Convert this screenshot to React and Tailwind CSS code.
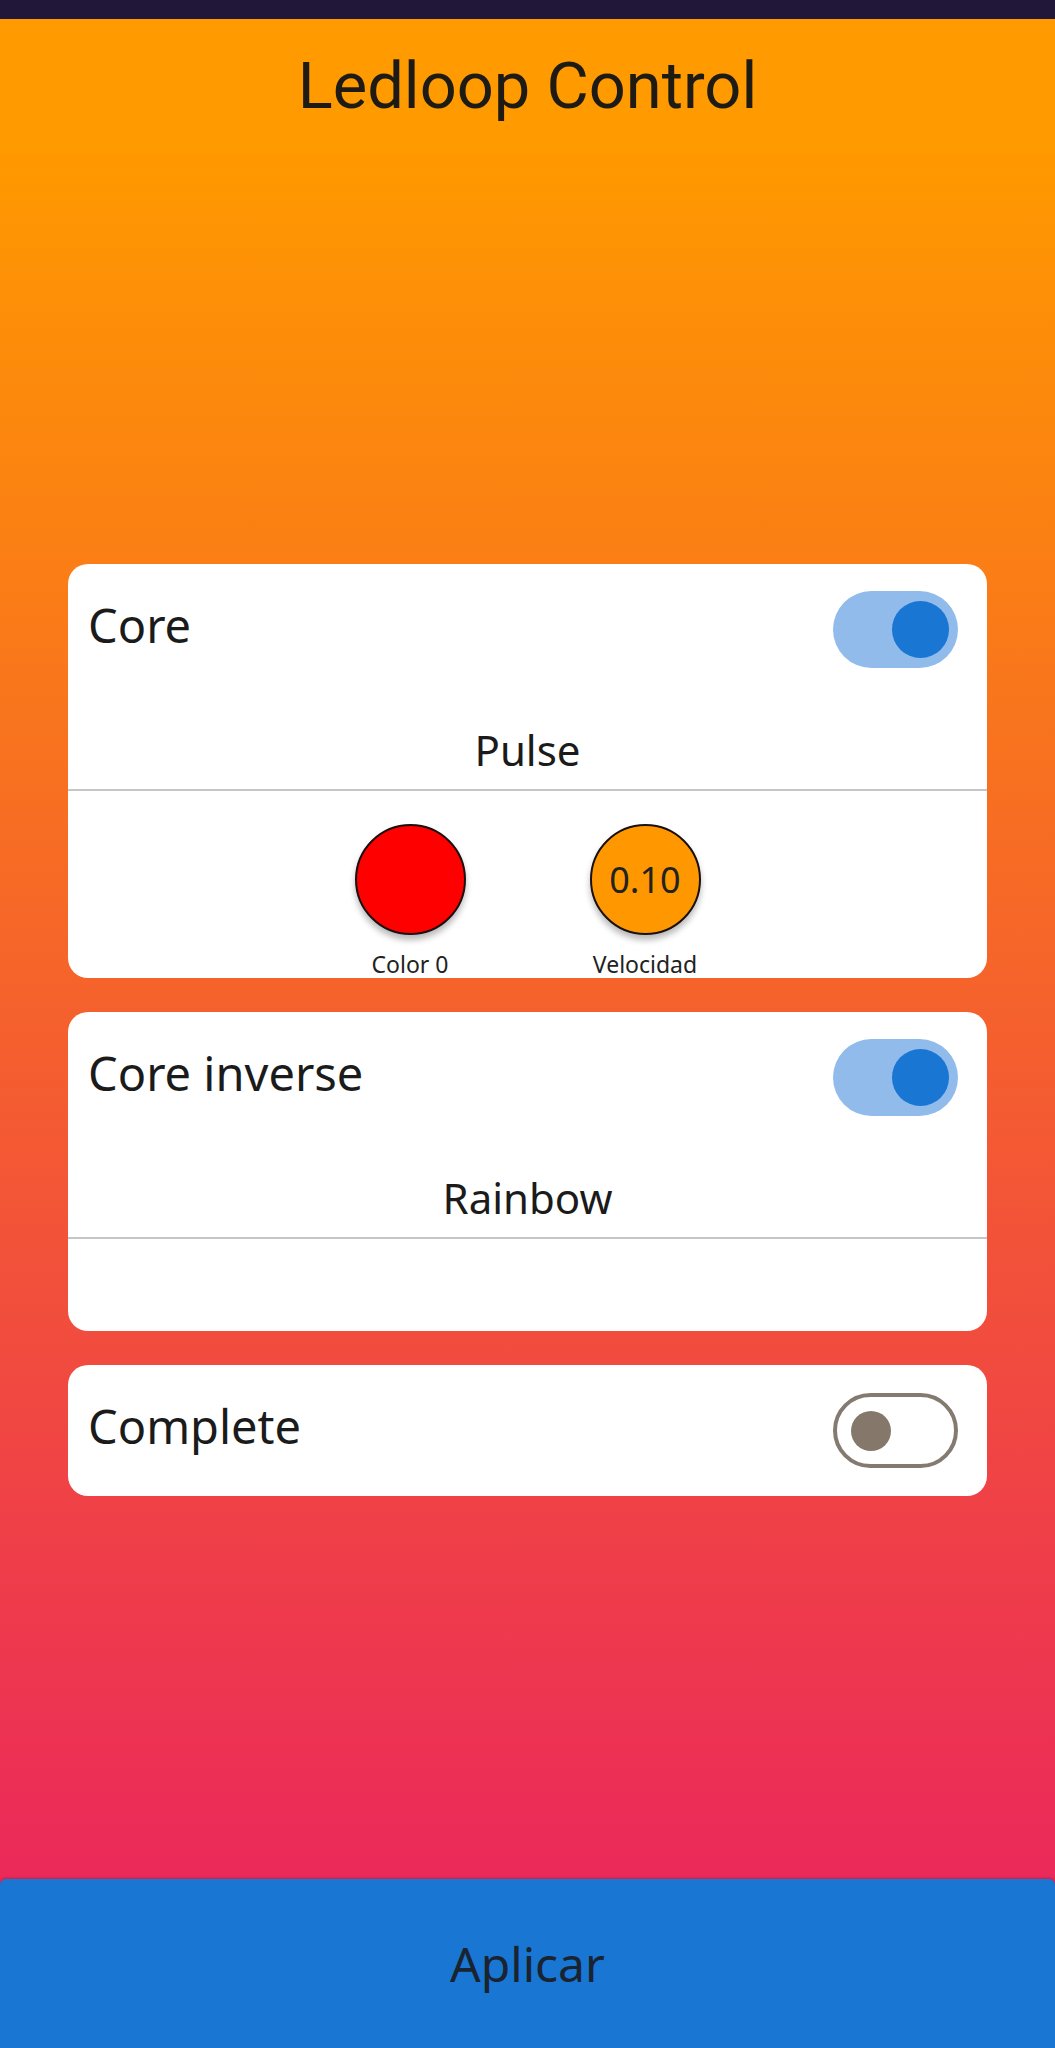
const effects = [
  {
    name: 'Core',
    on: true,
    mode: 'Pulse',
    params: [
      { kind: 'color', value: '#ff0000', label: 'Color 0' },
      { kind: 'number', value: '0.10', label: 'Velocidad' },
    ],
  },
  { name: 'Core inverse', on: true, mode: 'Rainbow', params: [] },
  { name: 'Complete', on: false },
];

const body = { fontFamily: '"Noto Sans", "Open Sans", sans-serif' };

function Toggle({ on }) {
  if (on) {
    return (
      <div className="flex h-[77px] w-[125px] items-center justify-end rounded-full bg-[#90bbea] pr-[9px]">
        <div className="h-[57px] w-[57px] rounded-full bg-[#1976d2]" />
      </div>
    );
  }
  return (
    <div className="flex h-[75px] w-[125px] items-center rounded-full border-4 border-[#857a6f] bg-white pl-[14px]">
      <div className="h-[40px] w-[40px] rounded-full bg-[#85786b]" />
    </div>
  );
}

function Param({ p }) {
  return (
    <div className="flex w-[111px] flex-col items-center">
      <div
        className="flex h-[111px] w-[111px] items-center justify-center rounded-full border-2 border-[#1a1010] shadow-[0_5px_6px_rgba(0,0,0,0.28)]"
        style={{ backgroundColor: p.kind === 'color' ? p.value : '#ff9800' }}
      >
        {p.kind === 'number' && <span className="text-[36px] leading-none text-[#222]">{p.value}</span>}
      </div>
      <span className="mt-[15px] whitespace-nowrap text-[23px] leading-[28px] text-[#222]">{p.label}</span>
    </div>
  );
}

function EffectCard({ effect }) {
  return (
    <div className="mx-auto w-[919px] overflow-hidden rounded-[20px] bg-white">
      <div className="flex h-[131px] items-center justify-between pl-[20px] pr-[29px]">
        <span className="mb-[8px] text-[47px] leading-none text-[#1b1b1b]">{effect.name}</span>
        <Toggle on={effect.on} />
      </div>
      {effect.mode && (
        <>
          <div className="h-[96px] border-b-2 border-[#c6c6c6] pt-[31px] text-center text-[42px] leading-[48px] text-[#1b1b1b]">
            {effect.mode}
          </div>
          {effect.params.length > 0 ? (
            <div className="flex h-[187px] justify-center gap-[124px] pt-[33px]">
              {effect.params.map((p) => (
                <Param key={p.label} p={p} />
              ))}
            </div>
          ) : (
            <div className="h-[92px]" />
          )}
        </>
      )}
    </div>
  );
}

export default function App() {
  return (
    <div className="flex h-[2048px] w-full flex-col bg-[linear-gradient(180deg,#ff9800_0%,#ff9800_8%,#e91e63_100%)]" style={body}>
      <div className="h-[19px] bg-[#201739]" />
      <header className="flex h-[135px] items-start justify-center bg-[#ff9a00] pt-[30px]">
        <h1 className="text-[65px] leading-[74px] text-[#1e1a14]" style={{ fontFamily: 'Roboto, sans-serif' }}>
          Ledloop Control
        </h1>
      </header>
      <main className="flex flex-1 flex-col gap-[34px] pt-[410px]">
        {effects.map((e) => (
          <EffectCard key={e.name} effect={e} />
        ))}
      </main>
      <button className="flex h-[169px] w-full items-center justify-center rounded-t-[6px] bg-[#1976d2] text-[48px] text-[#1a2330] shadow-[0_-1px_3px_rgba(0,0,0,0.2)]">
        Aplicar
      </button>
    </div>
  );
}
